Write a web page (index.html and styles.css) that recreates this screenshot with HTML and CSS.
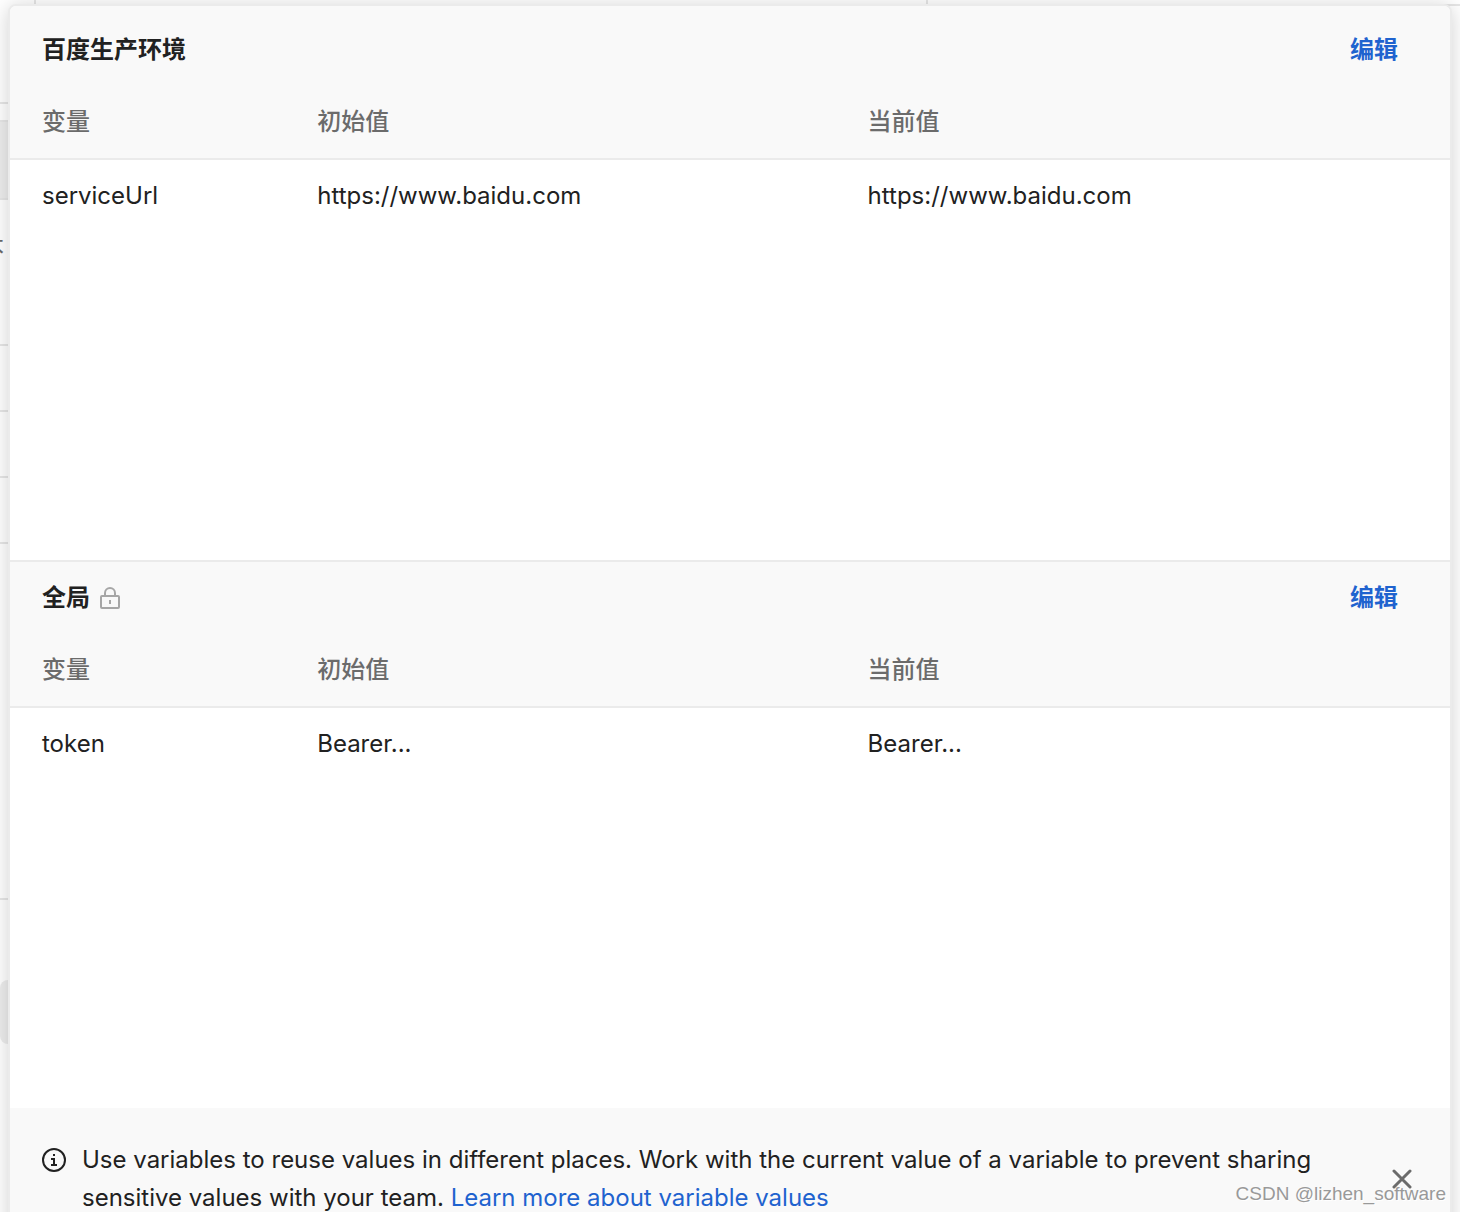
FILE: index.html
```html
<!DOCTYPE html>
<html lang="zh-CN">
<head>
<meta charset="utf-8">
<meta name="viewport" content="width=device-width, initial-scale=1">
<title>环境变量</title>
<link rel="stylesheet" href="styles.css">
</head>
<body>
<div class="workspace">
  <div class="tabstrip"><div class="tab tab-small"></div><div class="tab tab-wide"></div><div class="tab tab-rest"></div></div>
  <div class="sidebar">
    <div class="side-top"></div>
    <div class="side-gap"></div>
    <div class="side-field"></div>
    <div class="side-label"><span>本</span></div>
    <div class="side-row"></div>
    <div class="side-row"></div>
    <div class="side-row"></div>
    <div class="side-space"></div>
    <div class="side-pill"></div>
  </div>
</div>
<main class="popover">
  <section class="scope scope-first">
    <header class="scope-head">
      <h2>百度生产环境</h2>
      <button type="button" class="edit">编辑</button>
    </header>
    <div class="scope-body">
      <table>
        <thead><tr><th>变量</th><th>初始值</th><th>当前值</th></tr></thead>
        <tbody><tr><td>serviceUrl</td><td>https://www.baidu.com</td><td>https://www.baidu.com</td></tr></tbody>
      </table>
    </div>
  </section>
  <section class="scope">
    <header class="scope-head">
      <h2>全局</h2>
      <svg width="24" height="24" viewBox="0 0 24 24" fill="none" stroke="#a6a6a6" stroke-width="2" aria-hidden="true">
        <rect x="3" y="10" width="18" height="12" rx="1"/>
        <path d="M7 10V7a5 5 0 0 1 10 0v3M12 14v4"/>
      </svg>
      <button type="button" class="edit">编辑</button>
    </header>
    <div class="scope-body">
      <table>
        <thead><tr><th>变量</th><th>初始值</th><th>当前值</th></tr></thead>
        <tbody><tr><td>token</td><td>Bearer...</td><td>Bearer...</td></tr></tbody>
      </table>
    </div>
  </section>
  <footer class="tip">
    <svg class="info" width="24" height="24" viewBox="0 0 24 24" fill="none" stroke="#212121" stroke-width="2" aria-hidden="true">
      <circle cx="12" cy="12" r="11"/>
      <path d="M9 11h3v6M9 17h6"/>
      <path d="M11 7h2" />
    </svg>
    <p>Use variables to reuse values in different places. Work with the current value of a variable to prevent sharing sensitive values with your team. <a href="#">Learn more about variable values</a></p>
    <button type="button" class="close" aria-label="关闭">
      <svg width="20" height="20" viewBox="0 0 20 20" fill="none" stroke="#6b6b6b" stroke-width="3" stroke-linecap="round" aria-hidden="true"><path d="M2 2l16 16M18 2L2 18"/></svg>
    </button>
  </footer>
</main>
<div class="watermark">CSDN @lizhen_software</div>
</body>
</html>
```
FILE: styles.css
```css
* { box-sizing: border-box; }

body {
  margin: 0;
  position: relative;
  height: 100vh;
  overflow: hidden;
  background: #fff;
  color: #212121;
  font: 24px/38px Inter, "Noto Sans CJK SC", sans-serif;
}

.tabstrip {
  display: flex;
  height: 6px;
  border-bottom: 2px solid #e6e6e6;
}
.tab { border-right: 2px solid #e6e6e6; }
.tab-small { width: 36px; }
.tab-wide { width: 892px; }
.tab-rest { flex: 1; border: 0; }

.sidebar { width: 34px; margin-top: -2px; background: #fff; }
.side-top { height: 100px; border-bottom: 2px solid #e6e6e6; }
.side-gap { height: 16px; }
.side-field {
  height: 80px;
  background: #ededed;
  border: solid #e6e6e6;
  border-width: 2px 0;
}
.side-label {
  height: 146px;
  padding-top: 28px;
  border-bottom: 2px solid #e6e6e6;
  color: #6b6b6b;
}
.side-label span { display: block; width: 24px; margin-left: -20px; }
.side-row { height: 66px; border-bottom: 2px solid #e6e6e6; }
.side-space { height: 356px; border-bottom: 2px solid #e6e6e6; }
.side-pill {
  height: 64px;
  margin-top: 80px;
  border-radius: 8px;
  background: #ededed;
}

.popover {
  position: absolute;
  top: 4px;
  left: 8px;
  right: 8px;
  border: 2px solid #ebebeb;
  border-radius: 8px;
  background: #fff;
  box-shadow: 0 2px 20px rgba(0, 0, 0, 0.18);
  overflow: hidden;
}

.scope { border-top: 2px solid #ebebeb; background: #f9f9f9; }
.scope-first { border-top: 0; padding-top: 8px; }
.scope-head {
  display: flex;
  align-items: center;
  gap: 8px;
  height: 72px;
  padding: 0 52px 0 32px;
}
h2 { margin: 0; font-size: 24px; font-weight: 600; }
button {
  padding: 0;
  border: 0;
  background: none;
  font: inherit;
  cursor: pointer;
}
.edit { margin-left: auto; color: #1f63cf; font-weight: 600; }

.scope-body { height: 474px; background: #fff; }
table { width: 100%; border-collapse: collapse; }
thead { background: #f9f9f9; }
tr { display: flex; height: 72px; padding: 0 32px; align-items: center; }
thead tr { height: 74px; border-bottom: 2px solid #ebebeb; }
th, td { flex: 2; padding: 0; text-align: left; }
th:first-child, td:first-child { flex: 1; }
th { color: #6b6b6b; font-weight: 500; }

.tip {
  display: flex;
  align-items: center;
  padding: 33px 38px 32px 32px;
  background: #f9f9f9;
}
.info { flex: none; align-self: flex-start; margin: 7px 16px 0 0; }
.tip p { flex: 1; margin: 0; padding-right: 64px; }
.tip a { color: #1f63cf; text-decoration: none; }
.close { display: flex; flex: none; }

.watermark {
  position: absolute;
  right: 14px;
  bottom: 6px;
  color: #999;
  font: 19px/24px "Liberation Sans", Arial, sans-serif;
  text-shadow: 1px 1px 0 #fff;
}
```
